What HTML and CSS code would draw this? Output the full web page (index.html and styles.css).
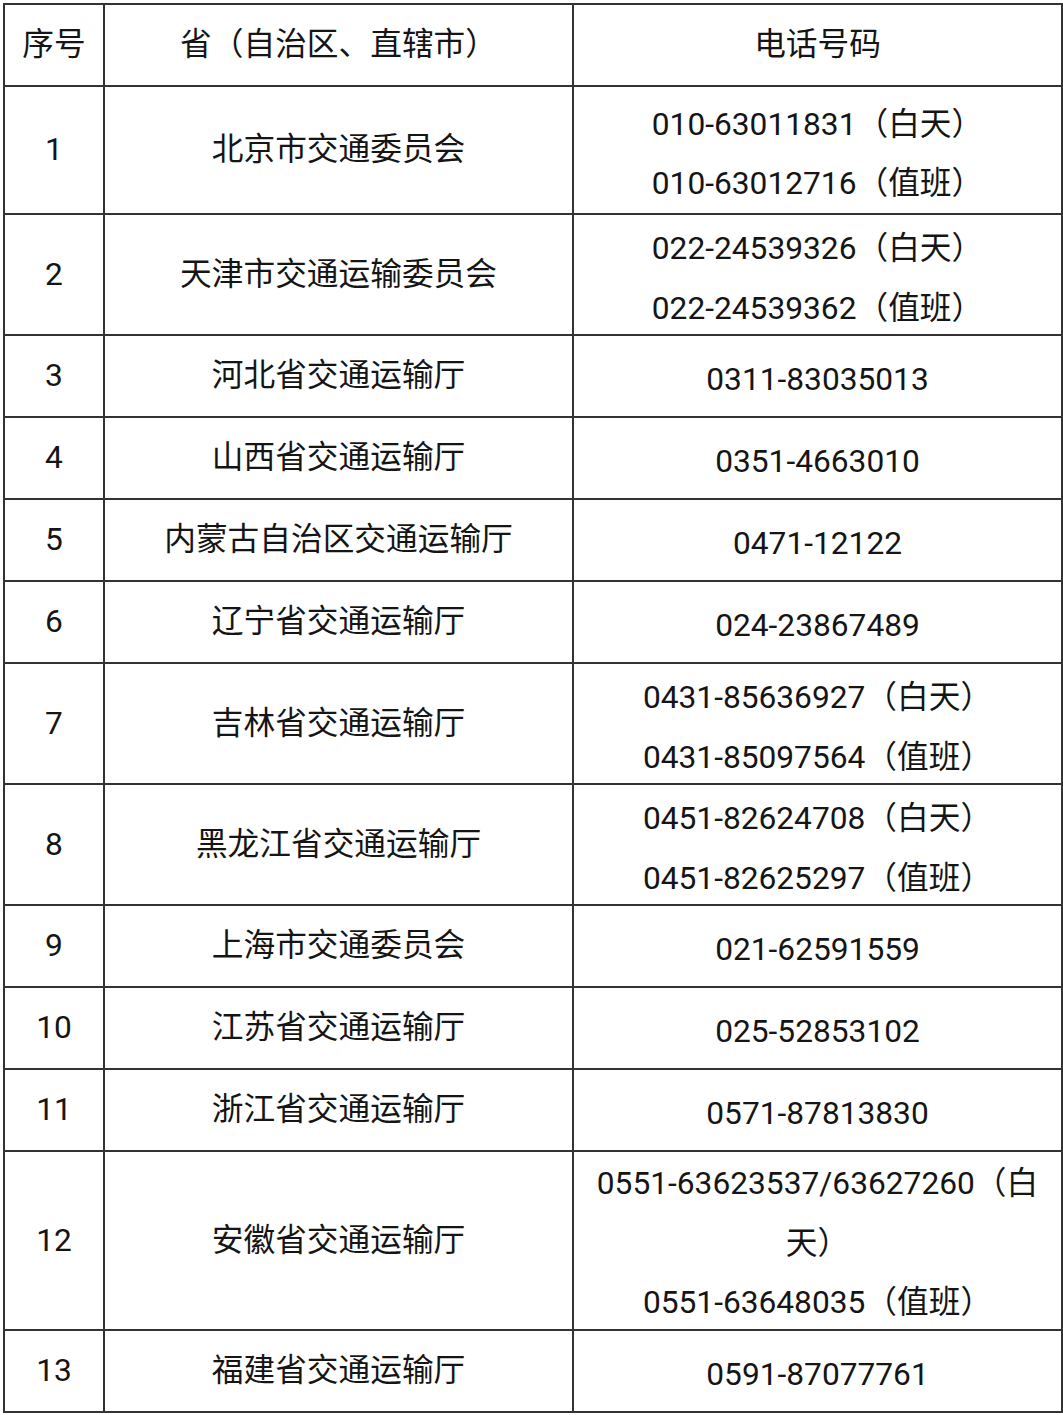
FILE: index.html
```html
<!DOCTYPE html>
<html lang="zh-CN">
<head>
<meta charset="utf-8">
<title>交通运输厅电话</title>
<link rel="stylesheet" href="styles.css">
</head>
<body>
<table class="contacts">
  <colgroup>
    <col class="c-no">
    <col class="c-name">
    <col class="c-tel">
  </colgroup>
  <tr class="row single head"><td>序号</td><td>省（自治区、直辖市）</td><td>电话号码</td></tr>
  <tr class="row first"><td>1</td><td>北京市交通委员会</td><td class="tel">010-63011831（白天）<br>010-63012716（值班）</td></tr>
  <tr class="row double"><td>2</td><td>天津市交通运输委员会</td><td class="tel">022-24539326（白天）<br>022-24539362（值班）</td></tr>
  <tr class="row single"><td>3</td><td>河北省交通运输厅</td><td class="tel">0311-83035013</td></tr>
  <tr class="row single"><td>4</td><td>山西省交通运输厅</td><td class="tel">0351-4663010</td></tr>
  <tr class="row single"><td>5</td><td>内蒙古自治区交通运输厅</td><td class="tel">0471-12122</td></tr>
  <tr class="row single"><td>6</td><td>辽宁省交通运输厅</td><td class="tel">024-23867489</td></tr>
  <tr class="row double"><td>7</td><td>吉林省交通运输厅</td><td class="tel">0431-85636927（白天）<br>0431-85097564（值班）</td></tr>
  <tr class="row double"><td>8</td><td>黑龙江省交通运输厅</td><td class="tel">0451-82624708（白天）<br>0451-82625297（值班）</td></tr>
  <tr class="row single"><td>9</td><td>上海市交通委员会</td><td class="tel">021-62591559</td></tr>
  <tr class="row single"><td>10</td><td>江苏省交通运输厅</td><td class="tel">025-52853102</td></tr>
  <tr class="row single"><td>11</td><td>浙江省交通运输厅</td><td class="tel">0571-87813830</td></tr>
  <tr class="row triple"><td>12</td><td>安徽省交通运输厅</td><td class="tel">0551-63623537/63627260（白<br>天）<br>0551-63648035（值班）</td></tr>
  <tr class="row single"><td>13</td><td>福建省交通运输厅</td><td class="tel">0591-87077761</td></tr>
</table>
</body>
</html>
```
FILE: styles.css
```css
html, body {
  margin: 0;
  padding: 0;
  background: #ffffff;
}

body {
  padding: 3px 0 0 3px;
  font-family: Roboto, "Noto Sans CJK SC", sans-serif;
  color: #151515;
}

.contacts {
  border-collapse: collapse;
  table-layout: fixed;
  width: 1058px;
  font-size: 31.7px;
  line-height: 59.5px;
  text-spacing-trim: space-all;
}

.c-no { width: 100px; }
.c-name { width: 469px; }
.c-tel { width: 489px; }

.contacts td {
  border: 2px solid #333333;
  padding: 0;
  text-align: center;
  vertical-align: middle;
  white-space: nowrap;
}

/* phone numbers sit a little below the middle of their cell */
.contacts td.tel {
  padding-top: 4px;
}

.contacts td.tel::after {
  content: "";
  display: block;
  margin-top: -4px;
}

/* three lines slightly overflow the row in the original */
.row.triple td.tel {
  padding-top: 0;
}

.row.triple td.tel::after {
  margin-top: -6px;
}

.row.single { height: 82px; }
.row.double { height: 120px; }
.row.first { height: 128px; }
.row.triple { height: 179px; }
```
